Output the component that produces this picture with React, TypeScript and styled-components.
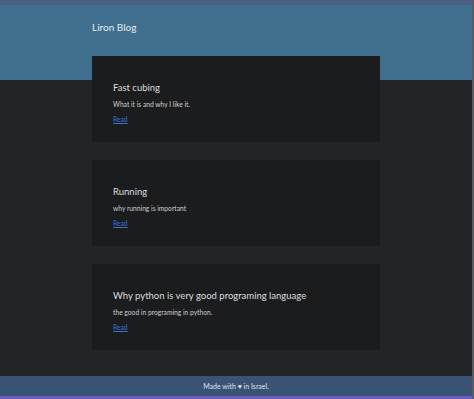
import styled, { createGlobalStyle } from 'styled-components';

const GlobalStyle = createGlobalStyle`
    html, body {
        margin: 0;
        padding: 0;
        background-color: #212528;
    }
    body {
        font-family: Lato, "Open Sans", sans-serif;
    }
`;

const Page = styled.div`
    display: flex;
    flex-direction: column;
    min-height: 399px;
    border-right: 2px solid #575b5f;
`;

const TopStrip = styled.div`
    height: 5px;
    background-color: #4b5d80;
`;

const Main = styled.main`
    flex: 1;
    background: linear-gradient(to bottom, #3f6e8e 0, #3f6e8e 75px, #212528 75px);
    padding-bottom: 26px;
`;

const Container = styled.div`
    width: 288px;
    margin: 0 auto;
`;

const SiteTitle = styled.h1`
    margin: 0;
    height: 51px;
    box-sizing: border-box;
    padding-top: 15px;
    font-size: 10px;
    line-height: 14px;
    font-weight: 400;
    color: #e6edf2;
`;

const PostList = styled.div`
    display: flex;
    flex-direction: column;
    gap: 18px;
`;

const Card = styled.article`
    height: 86px;
    box-sizing: border-box;
    padding: 26px 21px 0;
    background-color: #1b1c1e;
    display: flex;
    flex-direction: column;
    align-items: flex-start;
`;

const PostTitle = styled.h2`
    margin: 0 0 5px;
    font-size: 9.5px;
    line-height: 12px;
    font-weight: 400;
    color: #dedede;
`;

const PostDesc = styled.p`
    margin: 0 0 5px;
    font-size: 6.7px;
    line-height: 10px;
    color: #cfcfcf;
`;

const ReadLink = styled.a`
    font-size: 6.7px;
    line-height: 10px;
    color: #3d72d6;
    text-decoration: underline;
`;

const Footer = styled.footer`
    height: 20px;
    display: flex;
    align-items: center;
    justify-content: center;
    background-color: #3a5274;
    color: #dfe5ee;
    font-size: 7px;
`;

const BottomStrip = styled.div`
    height: 3px;
    background-color: #6b5fc6;
`;

const posts = [
    { title: 'Fast cubing', desc: 'What it is and why I like it.' },
    { title: 'Running', desc: 'why running is important' },
    { title: 'Why python is very good programing language', desc: 'the good in programing in python.' },
];

export default function App() {
    return (
        <>
            <GlobalStyle />
            <Page>
                <TopStrip />
                <Main>
                    <Container>
                        <SiteTitle>Liron Blog</SiteTitle>
                        <PostList>
                            {posts.map((p) => (
                                <Card key={p.title}>
                                    <PostTitle>{p.title}</PostTitle>
                                    <PostDesc>{p.desc}</PostDesc>
                                    <ReadLink href="#">Read</ReadLink>
                                </Card>
                            ))}
                        </PostList>
                    </Container>
                </Main>
                <Footer>Made with ♥ in Israel.</Footer>
                <BottomStrip />
            </Page>
        </>
    );
}
